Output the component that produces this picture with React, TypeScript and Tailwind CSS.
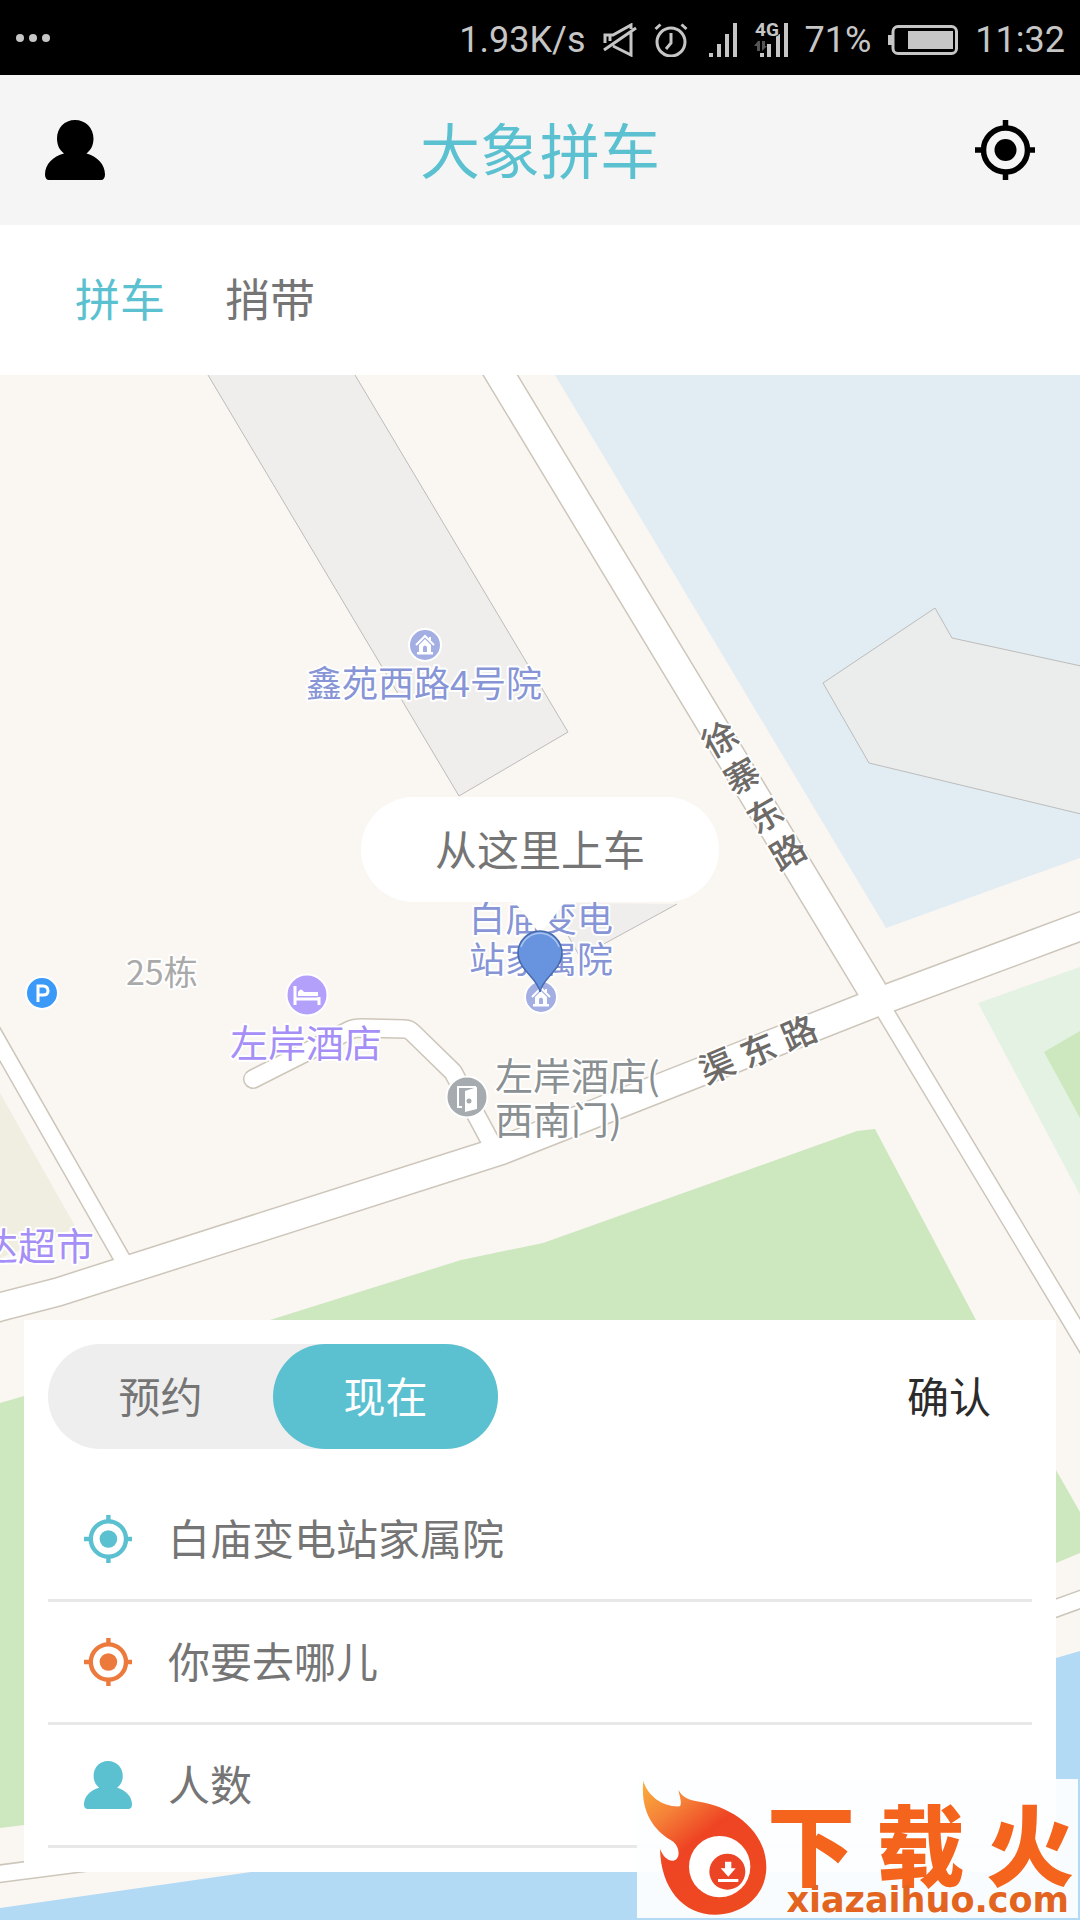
import React, { useState } from "react";

function PersonIcon({ className }: { className: string }) {
  return (
    <svg viewBox="0 0 60 60" className={className} fill="currentColor" aria-hidden="true">
      <path d="M30 0C40.500 0 48.500 8 48.500 18.500C48.500 25 46 30 41.500 33.500C52 36.500 60 44 60 54.500C60 58 58.500 60 56 60H4C1.500 60 0 58 0 54.500C0 44 8 36.500 19 33.500C14.500 30 12 25 12 18.500C12 8 19.500 0 30 0Z" />
    </svg>
  );
}

function TargetIcon({ className }: { className: string }) {
  return (
    <svg viewBox="0 0 60 60" className={className} fill="none" stroke="currentColor" strokeWidth="5.5" aria-hidden="true">
      <circle cx="30.500" cy="30" r="22" />
      <circle cx="30.500" cy="30" r="11" fill="currentColor" stroke="none" />
      <path d="M30.500 0V8M30.500 52V60M0 30H8M53 30H60" />
    </svg>
  );
}

function StatusBar() {
  return (
    <div className="flex h-[75px] items-center justify-between bg-black px-[15px] text-[#c6c6c6]">
      <svg viewBox="0 0 36 10" className="h-[10px] w-[36px]" fill="currentColor">
        <circle cx="5" cy="5" r="4" />
        <circle cx="18" cy="5" r="4" />
        <circle cx="31" cy="5" r="4" />
      </svg>
      <div className="flex items-center gap-[17px] pt-1 font-['Roboto',sans-serif] text-[36px] leading-[42px]">
        <span>1.93K/s</span>
        <svg viewBox="0 0 34 34" className="h-[34px] w-[34px]" fill="none" stroke="currentColor" strokeWidth="3">
          <path d="M2 20V12H10L28 2V6M7 18V13M1 27L33 5M10 23L28 32V9" />
        </svg>
        <svg viewBox="0 0 34 34" className="h-[34px] w-[34px]" fill="none" stroke="currentColor" strokeWidth="3">
          <circle cx="17" cy="19" r="14" />
          <path d="M17 10V20L12 26M1.500 6L6.500 1.500M27.500 1.500L32.500 6" />
        </svg>
        <svg viewBox="0 0 32 34" className="h-[34px] w-[32px]" fill="currentColor">
          <path d="M4 30h4v4h-4zM12 21h4v13h-4zM20 11h4v23h-4zM28 0h4v34h-4z" />
        </svg>
        <svg viewBox="0 0 34 34" className="h-[34px] w-[34px] overflow-visible" fill="currentColor">
          <path d="M6 30h4v4h-4zM13 21h4v13h-4zM22 11h4v23h-4zM30 0h4v34h-4z" />
          <path d="M4 18l-4 5h3v5h3v-10zM8 18v10l5-5h-2v-5z" fill="#555" />
          <text x="1" y="13" fontSize="19" fontWeight="700" fontFamily="Roboto, sans-serif" stroke="#000" strokeWidth="2" style={{ paintOrder: "stroke" }}>4G</text>
        </svg>
        <span>71%</span>
        <svg viewBox="0 0 70 30" className="h-[30px] w-[70px]" fill="none" stroke="currentColor" strokeWidth="3">
          <rect x="5" y="1.500" width="63.500" height="27" rx="5" />
          <path d="M0 10h4v10h-4zM20 6h45v18h-45z" fill="currentColor" stroke="none" />
        </svg>
        <span>11:32</span>
      </div>
    </div>
  );
}

function HouseMarker({ x, y }: { x: number; y: number }) {
  return (
    <g transform={`translate(${x} ${y})`}>
      <circle r="16" fill="#a3aee2" stroke="#fff" strokeWidth="2" />
      <path d="M-9 0L0 -9L9 0M5 -8V-5" fill="none" stroke="#fff" strokeWidth="2" />
      <path d="M-6 0L0 -6L6 0V7H8V9.500H-8V7H-6Z" fill="#fff" />
      <path d="M-2 7V2Q0 -1 2 2V7Z" fill="#a3aee2" />
    </g>
  );
}

function MapCanvas() {
  const casing = "#cdc6ba";
  const roads = [
    { d: "M124 1262L-10 1027", w: 15 },
    { d: "M253 1079L350 1030Q354 1028 362 1028L405 1029Q409 1029 413 1033L453 1072L495 1150", w: 17 },
    { d: "M872 990L1100 1369", w: 16 },
    { d: "M490 358L872 990", w: 28 },
    { d: "M-10 1310L0 1307L58 1292L500 1151L875 1003L1090 923", w: 27 },
    { d: "M1040 1614L1090 1596", w: 16 },
    { d: "M-10 1875L90 1862", w: 16 },
  ];
  const north = [
    { t: "徐", x: 720, y: 739 },
    { t: "寨", x: 742, y: 776 },
    { t: "东", x: 765, y: 815 },
    { t: "路", x: 788, y: 852 },
  ];
  const east = [
    { t: "渠", x: 717, y: 1066 },
    { t: "东", x: 758, y: 1050 },
    { t: "路", x: 799, y: 1033 },
  ];
  return (
    <svg
      viewBox="0 375 1080 1545"
      preserveAspectRatio="xMidYMin slice"
      className="absolute inset-0 h-full w-full font-['Noto_Sans_CJK_SC',sans-serif]"
    >
      <rect x="0" y="375" width="1080" height="1545" fill="#faf6f2" />
      <path d="M555 375H1080V858L886 928Z" fill="#e2edf3" />
      <path d="M0 1093L76 1228L0 1258Z" fill="#f0ede1" />
      <path d="M978 1003L1080 967V1195Z" fill="#e4f2e3" />
      <path d="M1044 1052L1080 1031V1118Z" fill="#cde8bf" />
      <path d="M0 1403L24 1396L270 1320L461 1260L543 1243L857 1131L875 1129L976 1320L1056 1470L1080 1512V1553L1056 1563L24 1825L0 1828Z" fill="#cde8bf" />
      <path d="M0 1908L251 1872L1056 1658L1080 1651V1920H0Z" fill="#b3daf4" />
      <g stroke="#bcbcbb" strokeWidth="1">
        <path d="M208 375L459 796L568 732L355 375" fill="#efeeec" />
        <path d="M1081 666L952 638L935 608L823 683L869 763L1081 814" fill="#ebedec" />
        <path d="M550 903L580 957L677 904" fill="#efeeec" />
      </g>
      <g fill="none" strokeLinecap="round" strokeLinejoin="round">
        {roads.map((r) => (
          <path key={r.d} d={r.d} stroke={casing} strokeWidth={r.w + 3} />
        ))}
        {roads.map((r) => (
          <path key={r.d} d={r.d} stroke="#fff" strokeWidth={r.w} />
        ))}
      </g>

      <HouseMarker x={425} y={645} />
      <HouseMarker x={541} y={997} />
      <g transform="translate(42 993)">
        <circle r="16" fill="#3b9af8" stroke="#fff" strokeWidth="2" />
        <path d="M-4 9V-7H1Q6 -7 6 -2Q6 2 1 2H-4" fill="none" stroke="#fff" strokeWidth="3" />
      </g>
      <g transform="translate(307 995)">
        <circle r="20.500" fill="#b3a0fb" stroke="#fff" strokeWidth="2" />
        <path d="M-12 -9V10M-12 4H12M12 2V10" stroke="#fff" strokeWidth="3" fill="none" />
        <path d="M-9 -3Q-6 -8 -3 -3H11V1H-9Z" fill="#fff" />
      </g>
      <g transform="translate(467 1097)">
        <circle r="20.500" fill="#a5abae" stroke="#fff" strokeWidth="2" />
        <path d="M-5 10H-9V-10H9" fill="none" stroke="#fff" strokeWidth="2" />
        <path d="M-2 -6L10 -10V12L-2 15Z" fill="#fff" />
        <circle cx="2" cy="4" r="2.500" fill="#a5abae" />
      </g>

      <g stroke="#fff" strokeWidth="4" strokeLinejoin="round" style={{ paintOrder: "stroke" }}>
        <g fontSize="36" fill="#8795d6">
          <text x="306" y="697">鑫苑西路4号院</text>
          <text x="469" y="932">白庙变电</text>
          <text x="469" y="973">站家属院</text>
        </g>
        <text x="126" y="985" fontSize="34" fill="#a9a9a9">25栋</text>
        <g fontSize="38" fill="#a58ff6">
          <text x="230" y="1057">左岸酒店</text>
          <text x="-20" y="1260">达超市</text>
        </g>
        <g fontSize="38" fill="#8a8f91">
          <text x="495" y="1090">左岸酒店(</text>
          <text x="495" y="1134">西南门)</text>
        </g>
        <g fontSize="35" fontWeight="500" fill="#6d6a67" textAnchor="middle">
          {north.map((c) => (
            <text key={c.t} transform={`translate(${c.x} ${c.y}) rotate(-30)`} y="13">{c.t}</text>
          ))}
          {east.map((c) => (
            <text key={c.t} transform={`translate(${c.x} ${c.y}) rotate(-23)`} y="13">{c.t}</text>
          ))}
        </g>
      </g>

      <path d="M513 900H567L540 934Z" fill="#fff" />
      <path d="M540 992C538 978 518 970 518 953A22 22 0 0 1 562 953C562 970 542 978 540 992Z" fill="#6893de" stroke="#4469ad" strokeWidth="1.500" />
      <path d="M521 947A20 20 0 0 1 559 947" fill="none" stroke="#a9c4f0" strokeWidth="1.500" />
    </svg>
  );
}

function Watermark() {
  return (
    <div className="absolute bottom-[2px] right-[2px] flex h-[139px] w-[441px] bg-[#fdfeff]/95">
      <svg viewBox="51 57 390 417" className="h-[139px] w-[130px] shrink-0">
        <defs>
          <linearGradient id="flame" x1="0" y1="0" x2="0.7" y2="1">
            <stop offset="0" stopColor="#fbb03b" />
            <stop offset="0.25" stopColor="#f58238" />
            <stop offset="0.5" stopColor="#ee4424" />
            <stop offset="1" stopColor="#ee4a20" />
          </linearGradient>
        </defs>
        <path
          fill="url(#flame)"
          d="M70 62C82 108 130 142 180 139C186 128 180 112 175 90C188 112 205 120 238 125C335 140 439 210 439 322C439 402 375 464 285 464C190 464 122 385 120 266C128 288 143 303 160 302C182 298 180 262 160 245C105 215 60 160 70 62Z"
        />
        <circle cx="299" cy="320" r="92" fill="#fff" />
        <circle cx="322" cy="335" r="54" fill="#ec4526" />
        <path d="M315 305H334V325H347L325 350L302 325H315ZM294 357H355V366H294Z" fill="#fff" />
      </svg>
      <div className="flex flex-1 flex-col pt-[18px]">
        <div className="flex justify-between pr-1 font-['Noto_Sans_CJK_SC',sans-serif] text-[88px] font-black leading-[88px] text-[#f4641c]">
          <span>下</span>
          <span>载</span>
          <span>火</span>
        </div>
        <span className="self-end pr-[9px] font-['DejaVu_Sans',sans-serif] text-[35px] font-bold leading-[30px] text-[#e2641f]">
          xiazaihuo.com
        </span>
      </div>
    </div>
  );
}

export default function App() {
  const [tab, setTab] = useState("拼车");
  const [time, setTime] = useState("现在");
  const rows = [
    { id: "from", label: "上车地点", color: "text-[#5bc1d0]", icon: "target", value: "白庙变电站家属院", hint: "" },
    { id: "to", label: "目的地", color: "text-[#ec7a3c]", icon: "target", value: "", hint: "你要去哪儿" },
    { id: "count", label: "乘车人数", color: "text-[#5bc1d0]", icon: "person", value: "", hint: "人数" },
  ];
  return (
    <div className="relative flex min-h-screen flex-col overflow-hidden bg-white font-['Noto_Sans_CJK_SC',sans-serif] text-[#757575]">
      <StatusBar />
      <header className="flex h-[150px] items-center justify-between bg-[#f5f5f5] px-[45px]">
        <button type="button" aria-label="个人中心" className="text-black">
          <PersonIcon className="h-[60px] w-[60px]" />
        </button>
        <h1 className="pb-1 text-[60px] leading-[88px] text-[#5bc1d0]">大象拼车</h1>
        <button type="button" aria-label="定位" className="text-black">
          <TargetIcon className="h-[60px] w-[60px]" />
        </button>
      </header>
      <nav className="flex h-[150px] items-center gap-[60px] px-[75px] pb-1 text-[45px]">
        {["拼车", "捎带"].map((t) => (
          <button key={t} type="button" onClick={() => setTab(t)} className={tab === t ? "text-[#5bc1d0]" : ""}>
            {t}
          </button>
        ))}
      </nav>
      <main className="relative flex min-h-[1100px] flex-1 flex-col justify-end px-6 pb-12">
        <MapCanvas />
        <button
          type="button"
          className="absolute left-1/2 top-[422px] h-[105px] w-[358px] -translate-x-1/2 rounded-full bg-white pb-1 text-[42px]"
        >
          从这里上车
        </button>
        <form className="relative bg-white p-6 text-[42px]">
          <div className="mb-[30px] flex items-center justify-between">
            <div className="flex h-[105px] w-[450px] rounded-full bg-[#eeeeee]">
              {["预约", "现在"].map((t) => (
                <button
                  key={t}
                  type="button"
                  aria-pressed={time === t}
                  onClick={() => setTime(t)}
                  className={time === t ? "flex-1 rounded-full bg-[#5bc1d0] pb-1 text-white" : "flex-1 rounded-full pb-1"}
                >
                  {t}
                </button>
              ))}
            </div>
            <button type="button" className="px-[41px] pb-1 text-[#2b2b2b]">
              确认
            </button>
          </div>
          {rows.map((r) => (
            <label key={r.id} htmlFor={r.id} className="flex h-[123px] items-center gap-9 border-b-[3px] border-[#e8e8e8] px-9">
              <span className={r.color}>
                {r.icon === "target" ? <TargetIcon className="h-12 w-12" /> : <PersonIcon className="h-12 w-12" />}
              </span>
              <input
                id={r.id}
                type="text"
                aria-label={r.label}
                defaultValue={r.value}
                placeholder={r.hint}
                className="min-w-0 flex-1 bg-transparent pb-1 leading-[60px] outline-none placeholder:text-[#757575]"
              />
            </label>
          ))}
        </form>
      </main>
      <Watermark />
    </div>
  );
}
